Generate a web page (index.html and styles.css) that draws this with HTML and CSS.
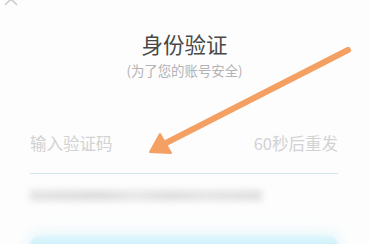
FILE: index.html
```html
<!DOCTYPE html>
<html lang="zh-CN">
<head>
<meta charset="utf-8">
<title>身份验证</title>
<link rel="stylesheet" href="styles.css">
</head>
<body>
<div class="page">
  <div class="topbar">
    <svg class="back" width="16" height="10" viewBox="0 0 16 10"><polyline points="2,8 8,2 14,8" fill="none" stroke="#cdcdcd" stroke-width="1.6"/></svg>
  </div>
  <h1 class="title">身份验证</h1>
  <p class="subtitle">(为了您的账号安全)</p>
  <div class="field">
    <span class="placeholder">输入验证码</span>
    <span class="resend">60秒后重发</span>
  </div>
  <div class="hint"><span class="blur-bar"></span></div>
  <div class="btn"></div>
  <svg class="arrow" width="369" height="244" viewBox="0 0 369 244">
    <line x1="348" y1="50" x2="160" y2="146" stroke="#f4a063" stroke-width="6" stroke-linecap="round"/>
    <polygon points="150,152 160,134 171,153" fill="#f4a063" stroke="#f4a063" stroke-width="2" stroke-linejoin="round"/>
  </svg>
</div>
</body>
</html>
```
FILE: styles.css
```css
html, body {
  margin: 0;
  padding: 0;
  background: #fdfdfd;
}
.page {
  position: relative;
  width: 369px;
  height: 244px;
  overflow: hidden;
  font-family: "Noto Sans CJK SC", "Noto Sans", sans-serif;
}
.topbar {
  height: 8px;
  padding-left: 3px;
}
.back {
  display: block;
  margin-top: -3px;
}
.title {
  margin: 23px 0 0;
  font-size: 21.5px;
  line-height: 31px;
  font-weight: 400;
  color: #484848;
  text-align: center;
}
.subtitle {
  margin: 0;
  font-size: 13.4px;
  line-height: 22px;
  color: #b3b3b3;
  text-align: center;
}
.field {
  display: flex;
  justify-content: space-between;
  align-items: center;
  margin: 48px 31px 0 30px;
  padding-bottom: 16px;
  border-bottom: 1px solid #d3e3ec;
  font-size: 16.5px;
  line-height: 28px;
  color: #d2d2d2;
}
.hint {
  margin: 13px 30px 0;
  height: 16px;
  display: flex;
  align-items: center;
}
.blur-bar {
  display: block;
  width: 232px;
  height: 11px;
  background: linear-gradient(90deg, #e4e4e4 0%, #dedede 30%, #e8e8e8 45%, #dfdfdf 60%, #e6e6e6 75%, #e0e0e0 100%);
  filter: blur(3px);
}
.btn {
  margin: 32px 31px 0 30px;
  height: 30px;
  border-radius: 10px;
  background: linear-gradient(180deg, #e4f7fc 0%, #c9eff9 40%, #c6eef9 100%);
  box-shadow: 0 0 12px 4px #eaf8fc;
  filter: blur(1px);
}
.arrow {
  position: absolute;
  left: 0;
  top: 0;
}
```
